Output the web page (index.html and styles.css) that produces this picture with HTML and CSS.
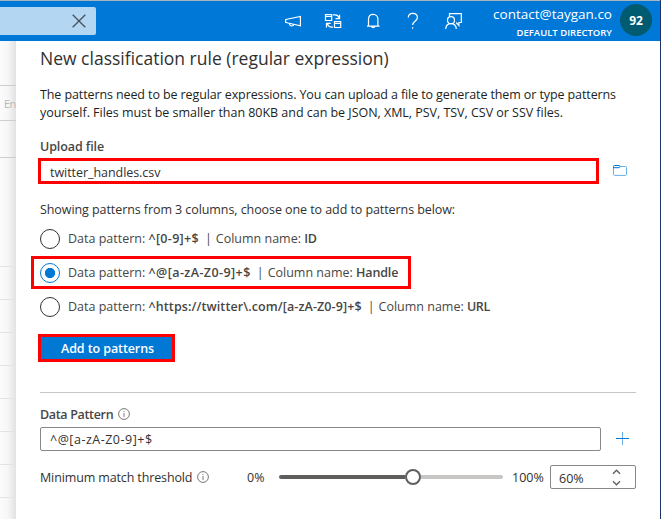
FILE: index.html
```
<!DOCTYPE html>
<html lang="en">
<head>
<meta charset="utf-8">
<title>New classification rule</title>
<link rel="stylesheet" href="styles.css">
</head>
<body>
<div class="app">
  <header class="topbar">
    <div class="search">
      <svg class="close" width="14" height="14" viewBox="0 0 14 14"><path d="M.7.7l12.6 12.6M13.3.7L.7 13.3"/></svg>
    </div>
    <nav class="tools">
      <svg width="20" height="20" viewBox="0 0 20 20"><path d="M2.600 8.700v2.500l2.500.8 12.300 2.800V5.500L5.100 8zM6.300 12.500c.3 1.700 1.200 2.500 2.500 2.500s1.900-.8 2.200-1.900"/></svg>
      <svg width="20" height="20" viewBox="0 0 20 20"><path d="M2.500 3.500h6.200v6H2.500zM2.500 5.300h6.200M11.500 10.500h6.200v6h-6.200zM11.500 12.300h6.200M10 3.800h2.200c2.200 0 3.300 1.200 3.800 3M16.600 3.800v3.900h-4.100M10 16.200H8.500c-2.200 0-3.400-1.300-4-3.300M3.500 16.400v-4.100h4.200"/></svg>
      <svg width="20" height="20" viewBox="0 0 20 20"><path d="M4 15.200h12.500M5.500 15V8.300c0-3 1.900-5 4.600-5s4.800 2 4.800 5V15M8.300 15.300c.2 1.700 3.600 1.700 3.800 0"/></svg>
      <svg width="20" height="20" viewBox="0 0 20 20"><path d="M5.300 6.600c0-2.700 1.700-4.300 4.500-4.300s4.600 1.600 4.600 4.200c0 3.800-4.800 3.600-4.800 7.500"/><path d="M9.600 16.300v1.500"/></svg>
      <svg width="20" height="20" viewBox="0 0 20 20"><path d="M6.500 5.500V2.700h11.800v8.800h-2.400v2.900l-2.800-2.900"/><circle cx="8" cy="9.200" r="3.500"/><path d="M2.700 18c.2-3.400 2.300-5.300 5.300-5.300s5.100 1.900 5.300 5.300"/></svg>
    </nav>
    <div class="account">
      <span class="mail">contact@taygan.co</span>
      <span class="directory">DEFAULT DIRECTORY</span>
    </div>
    <div class="avatar">92</div>
  </header>
  <div class="content">
    <aside class="backdrop">
      <div class="strip"></div>
      <div class="filter">En</div>
      <div class="head"></div>
      <div class="gap"></div>
      <div class="row"></div><div class="row"></div><div class="row"></div><div class="row"></div>
      <div class="row"></div><div class="row"></div><div class="row"></div><div class="row"></div>
    </aside>
    <main class="panel">
      <h1>New classification rule (regular expression)</h1>
      <p class="intro"><span class="tight">The patterns need to be regular expressions. You can upload a file to generate them or type patterns</span><br><span class="snug">yourself. Files must be smaller than 80KB and can be JSON, XML, PSV, TSV, CSV or SSV files.</span></p>
      <div class="label upload-label">Upload file</div>
      <div class="upload">
        <div class="file">twitter_handles.csv</div>
        <svg class="folder" width="14" height="11" viewBox="0 0 14 11"><path class="light" d="M.5 3v6.500q0 .9.900.9h11.200q.9 0 .9-.9V2.400q0-.9-.9-.9H7"/><path d="M.5 3V1.500q0-1 .9-1H6.500l.5 1-.8 1.200H.5"/></svg>
      </div>
      <div class="showing">Showing patterns from 3 columns, choose one to add to patterns below:</div>
      <div class="option"><i class="radio"></i><span>Data pattern: <b>^[0-9]+$</b><i class="sep">|</i>Column name: <b class="col">ID</b></span></div>
      <div class="option chosen"><i class="radio on"></i><span>Data pattern: <b>^@[a-zA-Z0-9]+$</b><i class="sep">|</i>Column name: <b class="col">Handle</b></span></div>
      <div class="option long"><i class="radio"></i><span>Data pattern: <b>^https://twitter\.com/[a-zA-Z0-9]+$</b><i class="sep">|</i>Column name: <b class="col">URL</b></span></div>
      <button class="add">Add to patterns</button>
      <hr>
      <div class="label pattern-label">Data Pattern
        <svg class="info" width="12" height="12" viewBox="0 0 12 12"><circle cx="6" cy="6" r="5.400"/><path d="M6 5v4M6 2.900v1"/></svg></div>
      <div class="pattern">
        <div class="field">^@[a-zA-Z0-9]+$</div>
        <svg class="plus" width="13" height="13" viewBox="0 0 13 13"><path class="light" d="M6.500 0v13"/><path d="M0 6.500h13"/></svg>
      </div>
      <div class="threshold">
        <span class="name">Minimum match threshold</span>
        <svg class="info" width="12" height="12" viewBox="0 0 12 12"><circle cx="6" cy="6" r="5.400"/><path d="M6 5v4M6 2.900v1"/></svg>
        <span class="zero">0%</span>
        <div class="slider"><i class="filled"></i><i class="thumb"></i><i class="rest"></i></div>
        <span class="hundred">100%</span>
        <div class="spin"><span>60%</span>
          <svg width="9" height="17" viewBox="0 0 9 17"><path d="M1 4.700L4.500 1.200 8 4.700M1 12.300l3.500 3.500L8 12.300"/></svg>
        </div>
      </div>
    </main>
  </div>
</div>
</body>
</html>
```
FILE: styles.css
```
* { box-sizing: border-box; }
body { margin: 0; background: #fff; }
.app {
  width: 661px; height: 519px; overflow: hidden;
  display: flex; flex-direction: column;
  border-right: 1px solid #1b3564;
  font-family: "Open Sans", "Noto Sans", sans-serif;
  font-size: 12.500px; color: #323130;
}
svg { display: block; fill: none; flex: none; }
span { white-space: nowrap; }
i { font-style: normal; }

.topbar {
  height: 41px; flex: none; display: flex; background: #0078d7;
  border-top: 1px solid #a9b4bd; color: #fff;
}
.search {
  width: 96px; height: 28px; margin-top: 6px; background: #b3d6f3;
  border-radius: 0 2px 2px 0; display: flex; align-items: center; justify-content: flex-end; padding-right: 10px;
}
.close { stroke: #45505a; stroke-width: 1.300; }
.tools { display: flex; gap: 20px; margin: 10px 0 0 187px; height: 20px; }
.tools svg { stroke: #fff; stroke-width: 1.200; }
.account { width: 149px; display: flex; flex-direction: column; align-items: flex-end; }
.mail { font-size: 13.500px; line-height: 18px; margin-top: 4px; }
.directory { font-size: 9.500px; font-weight: 600; line-height: 12px; margin-top: 4px; }
.avatar {
  width: 32px; height: 32px; margin: 3px 0 0 8px; border-radius: 50%; background: #005b70;
  font-weight: 700; font-size: 12px; line-height: 33px; text-align: center;
}

.content { flex: 1; display: flex; min-height: 0; }
.backdrop {
  width: 16px; flex: none; overflow: hidden;
  background: linear-gradient(90deg, #fcfcfc, #f7f7f7 45%, #e2e2e2);
}
.strip { height: 45px; border-bottom: 1px solid #cfcfcf; }
.filter { height: 35px; border-bottom: 1px solid #cfcfcf; padding-left: 4px; line-height: 36px; font-size: 11px; letter-spacing: -.5px; color: #b8b8b8; }
.head { height: 37px; border-bottom: 1px solid #cfcfcf; }
.gap { height: 76px; }
.row { height: 33px; border-bottom: 1px solid #e4e4e4; }

.panel { flex: 1; min-width: 0; padding: 0 24px; background: #fff; }
h1 { margin: 4px 0 0; font-size: 17.500px; font-weight: 500; line-height: 26px; height: 26px; color: #323130; }
.intro { margin: 15px 0 0; line-height: 18px; height: 36px; color: #201f1e; }
.tight { letter-spacing: -.105px; }
.snug { letter-spacing: -.03px; }
.label { font-weight: 600; color: #484644; display: flex; align-items: center; letter-spacing: -.1px; }
.upload-label { margin-top: 15px; height: 18px; }
.upload { display: flex; align-items: center; margin: 3px 0 0 -2px; height: 26px; }
.file { width: 561px; height: 26px; border: 3px solid #f00; padding-left: 9px; line-height: 23px; letter-spacing: -.05px; }
.folder { margin: -2px 0 0 14px; stroke: #0078d4; }
.light { stroke: #69afe5; }
.showing { margin-top: 16px; height: 19px; line-height: 19px; letter-spacing: -.075px; }
.option { display: flex; align-items: center; height: 33px; margin-top: 3px; color: #484644; }
.option b { font-weight: 600; color: #484644; letter-spacing: .3px; }
.option .col { letter-spacing: -.15px; }
.sep { margin: 0 4px 0 6px; }
.radio { width: 20px; height: 20px; border: 1px solid #323130; border-radius: 50%; margin-right: 8px; flex: none; }
.radio.on { border-color: #0078d4; background: radial-gradient(circle, #0078d4 4.800px, transparent 5.400px); }
.option.chosen { width: 380px; margin: 1px 0 1px -9px; padding-left: 6px; border: 3px solid #f00; }
.option.chosen b:not(.col) { letter-spacing: .42px; }
.option.chosen + .option { margin-top: 1px; }
.option.long b:not(.col) { letter-spacing: .1px; }
.option.long .col { letter-spacing: -.4px; }
.add {
  display: block; width: 137px; height: 28px; margin: 11px 0 0 -2px; padding: 1px 0 0 2px; border: 3px solid #f00;
  background: #0078d4; color: #fff; font: 600 12.500px/21px "Open Sans", sans-serif; letter-spacing: -.1px; text-align: center;
}
hr { margin: 30px 0 0; border: 0; height: 1px; background: #c8c6c4; }
.pattern-label { height: 18px; margin-top: 12px; gap: 5px; letter-spacing: -.33px; }
.info { stroke: #6b6967; stroke-width: .9; }
.pattern { display: flex; align-items: center; margin-top: 4px; height: 24px; }
.field { width: 561px; height: 24px; border: 1px solid #8a8886; border-radius: 2px; padding-left: 9px; line-height: 23px; letter-spacing: .5px; }
.plus { margin: -1px 0 0 15px; stroke: #0078d4; }
.threshold { display: flex; align-items: center; height: 24px; margin-top: 14px; }
.name { width: 157px; letter-spacing: -.13px; }
.zero { margin-left: 38px; width: 32px; }
.slider { width: 224px; display: flex; align-items: center; }
.filled { width: 126px; height: 4px; border-radius: 2px 0 0 2px; background: #605e5c; }
.thumb { width: 16px; height: 16px; border: 2px solid #605e5c; border-radius: 50%; background: #fff; }
.rest { flex: 1; height: 4px; border-radius: 0 2px 2px 0; background: #c8c6c4; }
.hundred { margin-left: 9px; width: 38px; }
.spin {
  width: 86px; height: 24px; flex: none; border: 1px solid #8a8886; border-radius: 2px;
  display: flex; align-items: center; justify-content: space-between; padding: 0 14px 0 8px;
}
.spin span { padding-top: 2px; }
.spin svg { stroke: #605e5c; stroke-width: 1.300; }
```
